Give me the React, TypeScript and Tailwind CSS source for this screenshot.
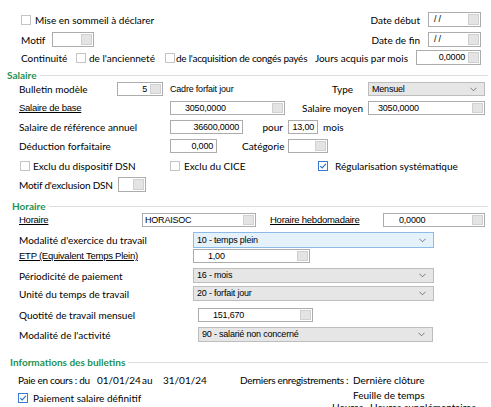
import type { ReactNode } from "react";

const val = "font-['Liberation_Sans',sans-serif] text-[9px] tracking-[-0.2px] text-black";
const ul = "font-['Liberation_Sans',sans-serif] text-[9.5px] tracking-[-0.25px] underline underline-offset-1";

function Check({ checked = false }: { checked?: boolean }) {
  return (
    <div
      className={`w-[10px] h-[10px] shrink-0 border bg-white flex items-center justify-center ${
        checked ? "border-[#3b78d0]" : "border-[#c4c4c4]"
      }`}
    >
      {checked && (
        <svg viewBox="0 0 10 10" className="w-[8px] h-[8px]">
          <path d="M1.5 5.2 L4 7.5 L8.6 2.4" fill="none" stroke="#2d6fcf" strokeWidth="1.4" />
        </svg>
      )}
    </div>
  );
}

function Field({
  className,
  value = "",
  pad = "",
  button = true,
}: {
  className: string;
  value?: string;
  pad?: string;
  button?: boolean;
}) {
  return (
    <div className={`flex h-full shrink-0 border border-[#acacac] bg-white ${className}`}>
      <div className={`flex-1 flex items-center ${pad ? `justify-start ${pad}` : "justify-end pr-[3px]"} ${val}`}>
        {value}
      </div>
      {button && <div className="w-[11px] my-[1px] mr-[1px] bg-[#e4e4e4] border border-[#d0d0d0]" />}
    </div>
  );
}

function Select({ className, value, blue = false }: { className: string; value: string; blue?: boolean }) {
  return (
    <div
      className={`flex h-full shrink-0 items-center border pl-[3px] pr-[7px] ${
        blue ? "bg-[#e5f1fb] border-[#8dbbe8]" : "bg-[#e6e6e6] border-[#bdbdbd]"
      } ${className}`}
    >
      <span className={`flex-1 ${val}`}>{value}</span>
      <svg viewBox="0 0 8 5" className="w-[7px] h-[5px]">
        <path d="M0.5 0.5 L4 4 L7.5 0.5" fill="none" stroke="#6a6a6a" strokeWidth="1" />
      </svg>
    </div>
  );
}

function Heading({ children, pl, mt }: { children: ReactNode; pl: string; mt: string }) {
  return (
    <div className={`flex items-center h-[12px] ${pl} ${mt}`}>
      <span className="text-[10px] font-bold text-[#1f9152] leading-none">{children}</span>
      <div className="flex-1 h-px bg-[#dddddd] ml-[3px] mr-[3px]" />
    </div>
  );
}

export default function App() {
  return (
    <div className="w-[491px] h-[407px] overflow-hidden bg-white font-['Lato',sans-serif] text-[10px] text-black leading-none whitespace-nowrap">
      {/* Top block */}
      <div className="flex items-center h-[15px] mt-[12px] pl-[21px] pr-[10px]">
        <Check />
        <span className="ml-[4px]">Mise en sommeil à déclarer</span>
        <span className="ml-auto">Date début</span>
        <Field className="ml-[8px] w-[53px]" value="/ /" pad="pl-[5px]" />
      </div>
      <div className="flex items-center h-[15px] mt-[5px] pl-[21px] pr-[10px]">
        <span className="w-[31px]">Motif</span>
        <Field className="w-[42px]" />
        <span className="ml-auto">Date de fin</span>
        <Field className="ml-[8px] w-[53px]" value="/ /" pad="pl-[5px]" />
      </div>
      <div className="flex items-center h-[15px] mt-[3px] pl-[21px] pr-[10px]">
        <span className="w-[55px]">Continuité</span>
        <Check />
        <span className="ml-[3px] w-[76px]">de l'ancienneté</span>
        <Check />
        <span className="ml-[1px] tracking-[-0.25px]">de l'acquisition de congés payés</span>
        <span className="ml-auto">Jours acquis par mois</span>
        <Field className="ml-[8px] w-[65px]" value="0,0000" />
      </div>

      {/* Salaire */}
      <Heading pl="pl-[7px]" mt="mt-[4px]">Salaire</Heading>
      <div className="flex items-center h-[14px] mt-[1px] pl-[19px]">
        <span className="w-[98px]">Bulletin modèle</span>
        <Field className="w-[46px]" value="5" />
        <span className={`ml-[7px] w-[162px] ${val}`}>Cadre forfait jour</span>
        <span className="w-[36px]">Type</span>
        <Select className="w-[117px]" value="Mensuel" />
      </div>
      <div className="flex items-center h-[14px] mt-[5px] pl-[19px]">
        <span className={`w-[151px] ${ul}`}>Salaire de base</span>
        <Field className="w-[115px]" value="3050,0000" pad="pl-[14px]" />
        <span className="w-[78px] text-right">Salaire moyen</span>
        <Field className="ml-[5px] w-[117px]" value="3050,0000" pad="pl-[9px]" />
      </div>
      <div className="flex items-center h-[14px] mt-[5px] pl-[19px]">
        <span className="w-[151px]">Salaire de référence annuel</span>
        <Field className="w-[73px]" value="36600,0000" button={false} />
        <span className="w-[40px] text-right">pour</span>
        <Field className="ml-[5px] w-[30px]" value="13,00" button={false} />
        <span className="ml-[5px]">mois</span>
      </div>
      <div className="flex items-center h-[14px] mt-[5px] pl-[19px]">
        <span className="w-[151px]">Déduction forfaitaire</span>
        <Field className="w-[47px]" value="0,000" button={false} />
        <span className="ml-[25px] w-[46px]">Catégorie</span>
        <Field className="w-[40px]" />
      </div>
      <div className="flex items-center h-[14px] mt-[6px] pl-[20px]">
        <Check />
        <span className="ml-[3px] w-[137px]">Exclu du dispositif DSN</span>
        <Check />
        <span className="ml-[4px] w-[134px]">Exclu du CICE</span>
        <Check checked />
        <span className="ml-[7px]">Régularisation systématique</span>
      </div>
      <div className="flex items-center h-[15px] mt-[4px] pl-[19px]">
        <span className="w-[99px] tracking-[-0.2px]">Motif d'exclusion DSN</span>
        <Field className="w-[28px]" />
      </div>

      {/* Horaire */}
      <Heading pl="pl-[12px]" mt="mt-[8px]">Horaire</Heading>
      <div className="flex items-center h-[14px] mt-[1px] pl-[19px]">
        <span className={`w-[123px] ${ul}`}>Horaire</span>
        <Field className="w-[114px]" value="HORAISOC" pad="pl-[2px]" />
        <span className={`ml-[14px] w-[113px] ${ul}`}>Horaire hebdomadaire</span>
        <Field className="w-[102px]" value="0,0000" pad="pl-[15px]" />
      </div>
      <div className="flex items-center h-[16px] mt-[5px] pl-[19px]">
        <span className="w-[174px]">Modalité d'exercice du travail</span>
        <Select className="w-[241px]" value="10 - temps plein" blue />
      </div>
      <div className="flex items-center h-[14px] mt-[1px] pl-[19px]">
        <span className={`w-[174px] ${ul}`}>ETP (Equivalent Temps Plein)</span>
        <Field className="w-[117px]" value="1,00" pad="pl-[14px]" />
      </div>
      <div className="flex items-center h-[15px] mt-[5px] pl-[19px]">
        <span className="w-[174px]">Périodicité de paiement</span>
        <Select className="w-[241px]" value="16 - mois" />
      </div>
      <div className="flex items-center h-[15px] mt-[3px] pl-[19px]">
        <span className="w-[174px]">Unité du temps de travail</span>
        <Select className="w-[241px]" value="20 - forfait jour" />
      </div>
      <div className="flex items-center h-[14px] mt-[7px] pl-[19px]">
        <span className="w-[179px]">Quotité de travail mensuel</span>
        <Field className="w-[115px]" value="151,670" pad="pl-[14px]" />
      </div>
      <div className="flex items-center h-[15px] mt-[5px] pl-[19px]">
        <span className="w-[179px]">Modalité de l'activité</span>
        <Select className="w-[235px]" value="90 - salarié non concerné" />
      </div>

      {/* Informations des bulletins */}
      <Heading pl="pl-[10px]" mt="mt-[14px]">Informations des bulletins</Heading>
      <div className="flex items-center h-[14px] mt-[5px] pl-[18px]">
        <span className="w-[79px] tracking-[-0.3px]">Paie en cours : du</span>
        <span className="w-[45px]">01/01/24</span>
        <span className="w-[21px]">au</span>
        <span className="w-[77px]">31/01/24</span>
        <span className="w-[113px] tracking-[-0.3px]">Derniers enregistrements :</span>
        <span>Dernière clôture</span>
      </div>
      <div className="flex items-center h-[14px] mt-[1px] pl-[18px]">
        <div className="flex items-center w-[335px] mt-[6px]">
          <Check checked />
          <span className="ml-[5px]">Paiement salaire définitif</span>
        </div>
        <span>Feuille de temps</span>
      </div>
      <div className="flex items-center h-[10px] pl-[332px]">
        <span className="w-[38px]">Heures</span>
        <span>Heures supplémentaires</span>
      </div>
    </div>
  );
}
